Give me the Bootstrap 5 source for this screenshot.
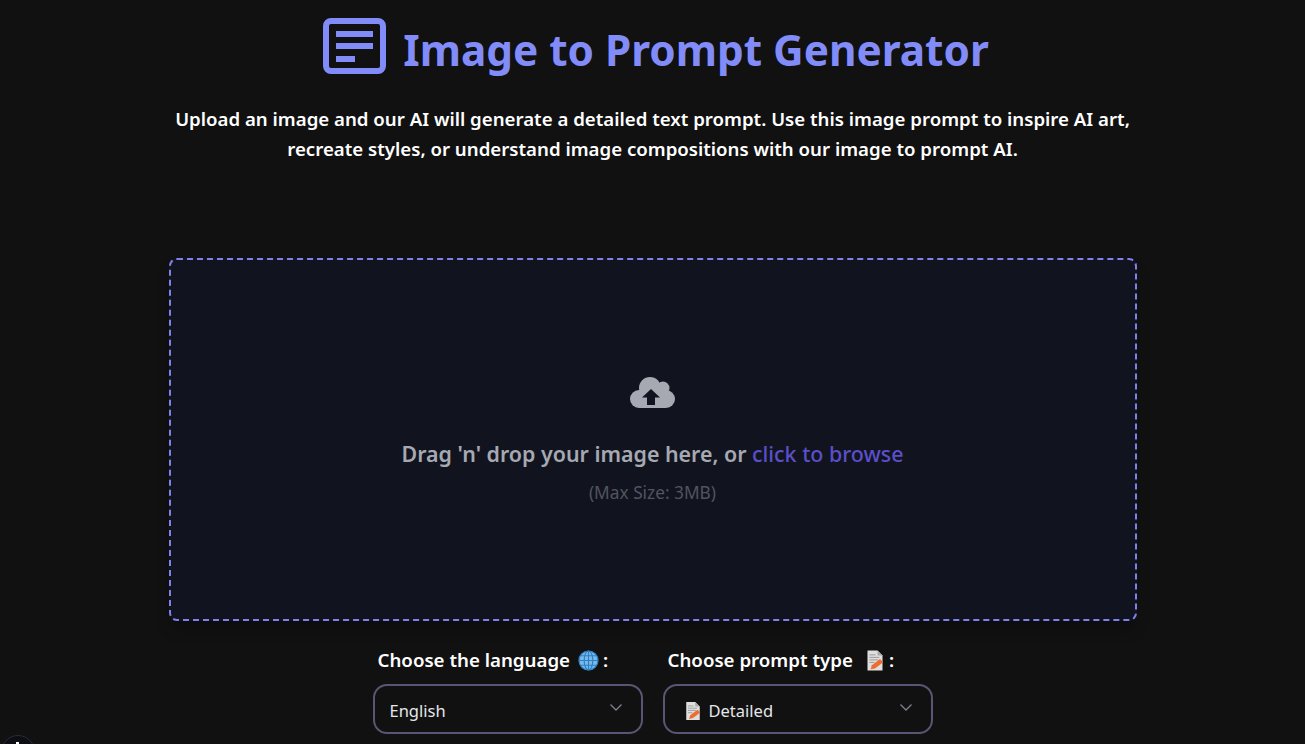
<!DOCTYPE html>
<html lang="en">
<head>
  <meta charset="UTF-8" />
  <title>Image to Prompt Generator</title>
  <link href="https://cdn.jsdelivr.net/npm/bootstrap@5.3.0/dist/css/bootstrap.min.css" rel="stylesheet" />
  <style>
    html, body { height: 100%; overflow: hidden; }
    body { background: #111111; color: #fff; font-family: "Noto Sans", "Open Sans", sans-serif; }
    .page-head { padding-top: 14px; height: 258px; }
    .page-title { color: #818cf8; font-size: 42.300px; font-weight: 700; line-height: 72px; margin: 0; gap: 17px; padding-left: 7px; }
    .page-title svg { width: 63px; height: 56px; margin-top: -9px; }
    .page-intro { font-size: 18.650px; font-weight: 600; line-height: 30px; width: 980px; margin: 18px auto 0; }
    .drop-zone { width: 968px; height: 363px; background: #11141f; border: 2px dashed #7f82ee; border-radius: 8px; box-shadow: 0 10px 15px -3px rgba(0,0,0,.3); margin: 0 auto; padding-top: 2px; }
    .drop-zone svg { width: 45px; height: 32px; }
    .drop-text { color: #a7a9b2; font-size: 21.400px; font-weight: 600; line-height: 28px; margin: 31px 0 0; }
    .drop-text span { color: #5b4fc9; font-weight: 500; }
    .drop-hint { color: #51535f; font-size: 17.300px; line-height: 24px; margin: 13px 0 0; }
    .pick-row { gap: 20px; margin-top: 27px; }
    .pick-col { width: 270px; }
    .pick-label { font-size: 18.700px; font-weight: 600; line-height: 24px; padding-left: 5px; margin-bottom: 12px; gap: 8px; }
    .label-colon { margin-left: -4px; }
    .pick-box { height: 50px; border: 2px solid #5b5474; border-radius: 14px; padding: 4px 19px 0 15px; color: #e5e7eb; font-size: 16.500px; gap: 7px; }
    .pick-box .chev { margin-left: auto; width: 12px; height: 7px; margin-top: -7px; }
    .corner-dot { position: fixed; left: 1px; top: 735px; width: 34px; height: 34px; border-radius: 50%; border: 1px solid #2b2b40; background: #0d0d14; }
    .corner-dot::after { content: ""; position: absolute; left: 14px; top: 6px; width: 3px; height: 6px; background: #fff; }
  </style>
</head>
<body>

<svg width="0" height="0" class="position-absolute">
  <defs>
    <symbol id="memo" viewBox="0 0 16 16">
      <path d="M2 0h8l4 4v12H2z" fill="#dfdfdf"/>
      <path d="M10 0v4h4z" fill="#a8a8a8"/>
      <path d="M3.500 3.500h5M3.500 5.500h8M3.500 7.500h7M3.500 9.500h4" stroke="#9a9a9a" stroke-width=".8"/>
      <path d="M4.500 15l1-3.200 6.500-5 2.500 2.500-6.500 5z" fill="#ed6c30"/>
    </symbol>
  </defs>
</svg>

<header class="page-head text-center">
  <h1 class="page-title d-flex justify-content-center align-items-center">
    <svg viewBox="0 0 63 56" fill="none">
      <rect x="3" y="3" width="57" height="50" rx="5" stroke="#818cf8" stroke-width="6"/>
      <path d="M13 16h37M13 28h37M13 41h19" stroke="#818cf8" stroke-width="6"/>
    </svg>
    <span>Image to Prompt Generator</span>
  </h1>
  <p class="page-intro">Upload an image and our AI will generate a detailed text prompt. Use this image prompt to inspire AI art, recreate styles, or understand image compositions with our image to prompt AI.</p>
</header>

<main>
  <div class="drop-zone d-flex flex-column align-items-center justify-content-center text-center">
    <svg viewBox="0 0 45 32">
      <g fill="#a7a9b2">
        <circle cx="9" cy="22" r="9"/>
        <circle cx="20" cy="11" r="11"/>
        <circle cx="33" cy="11" r="6.500"/>
        <circle cx="36" cy="22" r="9"/>
        <rect x="9" y="14" width="27" height="17"/>
      </g>
      <path fill="#11141f" d="M21 12l9 8.500h-5V28h-8v-7.500h-5z"/>
    </svg>
    <p class="drop-text">Drag 'n' drop your image here, or <span>click to browse</span></p>
    <p class="drop-hint">(Max Size: 3MB)</p>
  </div>

  <div class="pick-row d-flex justify-content-center">
    <div class="pick-col">
      <div class="pick-label d-flex align-items-center">
        <span>Choose the language</span>
        <svg width="21" height="21" viewBox="0 0 22 22" fill="none" stroke="#2f7fc4" stroke-width="1.200">
          <circle cx="11" cy="11" r="10" fill="#78b9eb"/>
          <ellipse cx="11" cy="11" rx="4.500" ry="10"/>
          <path d="M11 1v20M1 11h20M2.500 6h17M2.500 16h17"/>
        </svg>
        <span class="label-colon">:</span>
      </div>
      <div class="pick-box d-flex align-items-center">
        <span>English</span>
        <svg class="chev" viewBox="0 0 12 7" fill="none" stroke="#807e8f" stroke-width="1.300"><path d="M.5 .5l5.500 5.500 5.500-5.500"/></svg>
      </div>
    </div>
    <div class="pick-col">
      <div class="pick-label d-flex align-items-center">
        <span>Choose prompt type</span>
        <svg width="20" height="21" class="ms-1"><use href="#memo"/></svg>
        <span class="label-colon">:</span>
      </div>
      <div class="pick-box d-flex align-items-center">
        <svg width="18" height="18" class="ms-1"><use href="#memo"/></svg>
        <span>Detailed</span>
        <svg class="chev" viewBox="0 0 12 7" fill="none" stroke="#807e8f" stroke-width="1.300"><path d="M.5 .5l5.500 5.500 5.500-5.500"/></svg>
      </div>
    </div>
  </div>
</main>

<div class="corner-dot"></div>

<script src="https://cdn.jsdelivr.net/npm/bootstrap@5.3.0/dist/js/bootstrap.bundle.min.js"></script>
</body>
</html>
